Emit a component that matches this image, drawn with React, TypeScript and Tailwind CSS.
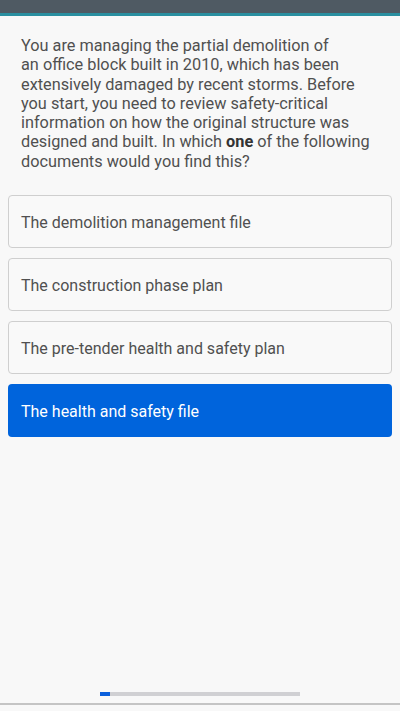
import React from "react";

const options = [
  "The demolition management file",
  "The construction phase plan",
  "The pre-tender health and safety plan",
  "The health and safety file",
];

export default function App() {
  return (
    <div
      className="w-[400px] h-[711px] bg-[#f8f8f8] flex flex-col overflow-hidden"
      style={{ fontFamily: "Roboto, 'Noto Sans', sans-serif" }}
    >
      <div className="h-[13px] bg-[#4f5a63] shrink-0" />
      <div className="h-[3px] bg-[#2a8fa0] shrink-0" />
      <div className="flex-1 flex flex-col">
        <p className="pl-[21px] pr-[20px] pt-[20px] text-[16.3px] leading-[19.3px] text-[#505050]">
          You are managing the partial demolition of<br />
          an office block built in 2010, which has been<br />
          extensively damaged by recent storms. Before<br />
          you start, you need to review safety-critical<br />
          information on how the original structure was<br />
          designed and built. In which <b className="font-bold text-[#333]">one</b> of the following<br />
          documents would you find this?
        </p>
        <div className="mt-[24px] px-[8px] flex flex-col gap-[10px]">
          {options.map((o, i) =>
            i === 3 ? (
              <div
                key={o}
                className="h-[53px] rounded-[4px] bg-[#0064dc] flex items-center pl-[13px] pt-[3px] text-[16px] text-white"
              >
                {o}
              </div>
            ) : (
              <div
                key={o}
                className="h-[53px] rounded-[4px] border border-[#cfcfcf] bg-[#f9f9f9] flex items-center pl-[12px] pt-[3px] text-[16px] text-[#505050]"
              >
                {o}
              </div>
            )
          )}
        </div>
        <div className="flex-1" />
        <div className="flex justify-center pb-[7px]">
          <div className="w-[200px] h-[4px] bg-[#d0d0d3] flex">
            <div className="w-[10px] h-full bg-[#0b60dc]" />
          </div>
        </div>
        <div className="h-[2px] bg-[#c4c4c4]" />
        <div className="h-[6px] bg-[#f8f8f8]" />
      </div>
    </div>
  );
}
